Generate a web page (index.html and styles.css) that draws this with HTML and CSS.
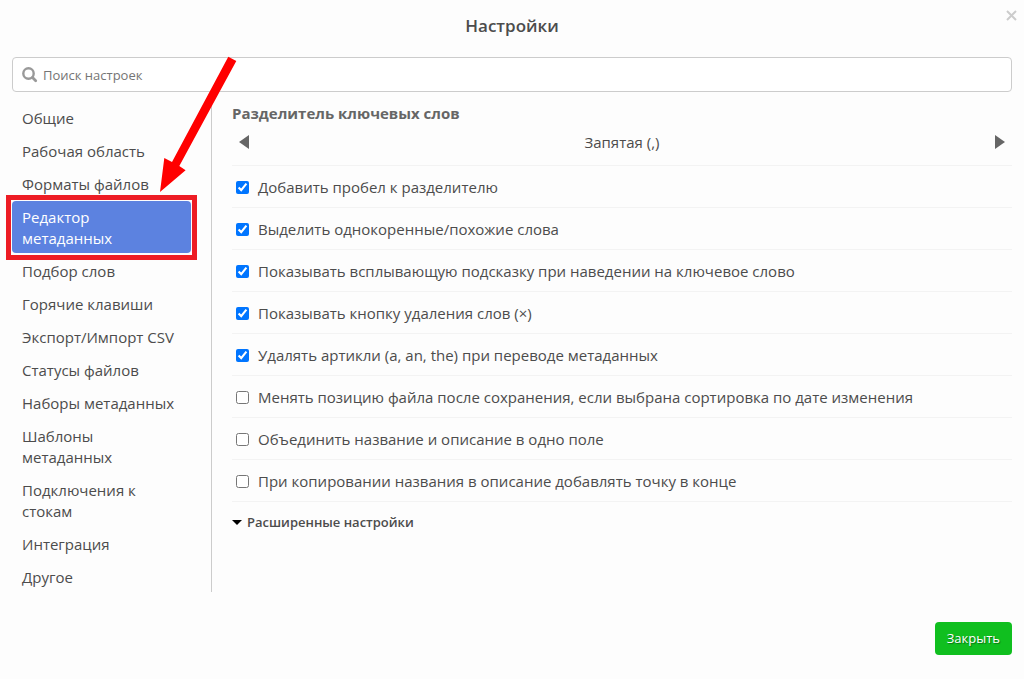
FILE: index.html
```html
<!DOCTYPE html>
<html lang="ru">
<head>
<meta charset="utf-8">
<meta name="viewport" content="width=device-width, initial-scale=1">
<title>Настройки</title>
<link rel="stylesheet" href="styles.css">
</head>
<body>
<main class="dialog">
  <header class="dialog-header">
    <h1 class="dialog-title">Настройки</h1>
    <button class="dialog-close" type="button" aria-label="Закрыть окно">
      <svg width="11" height="11" viewBox="0 0 11 11" aria-hidden="true"><path d="M1 1l9 9M10 1l-9 9" stroke="#ccc" stroke-width="2" fill="none"/></svg>
    </button>
  </header>
  <label class="search">
    <svg class="search-icon" width="16" height="16" viewBox="0 0 16 16" aria-hidden="true"><circle cx="6.5" cy="6.5" r="5.2" fill="none" stroke="#999" stroke-width="2.4"/><path d="M10.5 10.5l3.2 3.2" stroke="#999" stroke-width="2.8" stroke-linecap="round"/></svg>
    <input class="search-input" type="text" placeholder="Поиск настроек" aria-label="Поиск настроек">
  </label>
  <div class="columns">
    <nav class="nav">
      <a class="nav-link" href="#">Общие</a>
      <a class="nav-link" href="#">Рабочая область</a>
      <a class="nav-link" href="#">Форматы файлов</a>
      <a class="nav-link nav-link-active" href="#" aria-current="page">Редактор метаданных</a>
      <a class="nav-link" href="#">Подбор слов</a>
      <a class="nav-link" href="#">Горячие клавиши</a>
      <a class="nav-link" href="#">Экспорт/Импорт CSV</a>
      <a class="nav-link" href="#">Статусы файлов</a>
      <a class="nav-link" href="#">Наборы метаданных</a>
      <a class="nav-link" href="#">Шаблоны метаданных</a>
      <a class="nav-link" href="#">Подключения к стокам</a>
      <a class="nav-link" href="#">Интеграция</a>
      <a class="nav-link" href="#">Другое</a>
    </nav>
    <section class="content">
      <h2 class="section-title">Разделитель ключевых слов</h2>
      <div class="switcher">
        <button class="switcher-button" type="button" aria-label="Назад"><svg width="10" height="14" viewBox="0 0 10 14" aria-hidden="true"><path d="M10 0v14L0 7z" fill="#666"/></svg></button>
        <span>Запятая (,)</span>
        <button class="switcher-button" type="button" aria-label="Вперёд"><svg width="10" height="14" viewBox="0 0 10 14" aria-hidden="true"><path d="M0 0v14l10-7z" fill="#666"/></svg></button>
      </div>
      <label class="option"><input class="option-box" type="checkbox" checked>Добавить пробел к разделителю</label>
      <label class="option"><input class="option-box" type="checkbox" checked>Выделить однокоренные/похожие слова</label>
      <label class="option"><input class="option-box" type="checkbox" checked>Показывать всплывающую подсказку при наведении на ключевое слово</label>
      <label class="option"><input class="option-box" type="checkbox" checked>Показывать кнопку удаления слов (×)</label>
      <label class="option"><input class="option-box" type="checkbox" checked>Удалять артикли (a, an, the) при переводе метаданных</label>
      <label class="option"><input class="option-box" type="checkbox">Менять позицию файла после сохранения, если выбрана сортировка по дате изменения</label>
      <label class="option"><input class="option-box" type="checkbox">Объединить название и описание в одно поле</label>
      <label class="option"><input class="option-box" type="checkbox">При копировании названия в описание добавлять точку в конце</label>
      <button class="advanced" type="button"><svg width="10" height="5" viewBox="0 0 10 5" aria-hidden="true"><path d="M0 0h10L5 5z" fill="#000"/></svg>Расширенные настройки</button>
    </section>
  </div>
  <footer class="dialog-footer">
    <button class="close-button" type="button">Закрыть</button>
  </footer>
  <svg class="pointer" width="90" height="140" viewBox="0 0 90 140" aria-hidden="true"><path d="M78.3 6.7L86.3 11L29.3 116L35.6 120.3L10 142L14.3 108L22 112z" fill="#f00"/></svg>
</main>
</body>
</html>
```
FILE: styles.css
```css
* { box-sizing: border-box; }
body {
  margin: 0;
  background: #fdfdfd;
  color: #4c4c4c;
  font: 15px/21px "Open Sans", "Noto Sans", sans-serif;
}
button { font: inherit; border: 0; background: none; padding: 0; cursor: pointer; }
svg { display: block; flex: none; }
.dialog { position: relative; padding: 0 12px 24px; }
.dialog-header { position: relative; padding: 15px 0 20px; }
.dialog-title { margin: 0; text-align: center; font-size: 17px; line-height: 22px; font-weight: 600; }
.dialog-close { position: absolute; top: 10px; right: -5px; }
.search {
  display: flex;
  align-items: center;
  gap: 5px;
  height: 35px;
  padding: 0 9px;
  border: 1px solid #ccc;
  border-radius: 4px;
  background: #fff;
}
.search-input {
  flex: 1;
  min-width: 0;
  padding: 1px 0 0;
  border: 0;
  outline: 0;
  background: none;
  font: inherit;
  font-size: 13px;
}
.search-input::placeholder { color: #757575; }
.columns { display: flex; gap: 20px; padding-top: 10px; }
.nav {
  display: flex;
  flex-direction: column;
  gap: 2px;
  flex: none;
  width: 200px;
  padding-right: 20px;
  border-right: 1px solid #ccc;
}
.nav-link { padding: 6px 10px 4px; border-radius: 4px; color: #4c4c4c; text-decoration: none; }
.nav-link-active {
  position: relative;
  background: #5c82e0;
  color: #fff;
  font-weight: 500;
}
.nav-link-active::after {
  content: "";
  position: absolute;
  inset: -6px -6px -7px;
  border: 5px solid #ed1c24;
}
.content { flex: 1; min-width: 0; }
.section-title { margin: 0; padding-top: 1px; font-size: 15px; line-height: 21px; font-weight: 700; color: #666; }
.switcher {
  display: flex;
  align-items: center;
  justify-content: space-between;
  height: 42px;
  padding: 0 7px 5px;
  border-bottom: 1px solid #f3f3f3;
}
.option {
  display: flex;
  align-items: center;
  gap: 9px;
  min-height: 42px;
  padding: 2px 4px 0;
  border-bottom: 1px solid #f3f3f3;
}
.option-box { flex: none; width: 13px; height: 13px; margin: 0; }
.advanced { display: flex; align-items: center; gap: 5px; margin-top: 10px; color: #4c4c4c; font-size: 13px; line-height: 21px; font-weight: 600; }
.dialog-footer { display: flex; justify-content: flex-end; padding-top: 30px; }
.close-button {
  height: 33px;
  padding: 0 12px;
  border-radius: 4px;
  background: #10bf1f;
  color: #fff;
  font-size: 13px;
  font-weight: 500;
  text-shadow: 1px 1px 1px rgba(0, 0, 0, 0.4);
}
.pointer { position: absolute; left: 150px; top: 50px; overflow: visible; pointer-events: none; }
```
